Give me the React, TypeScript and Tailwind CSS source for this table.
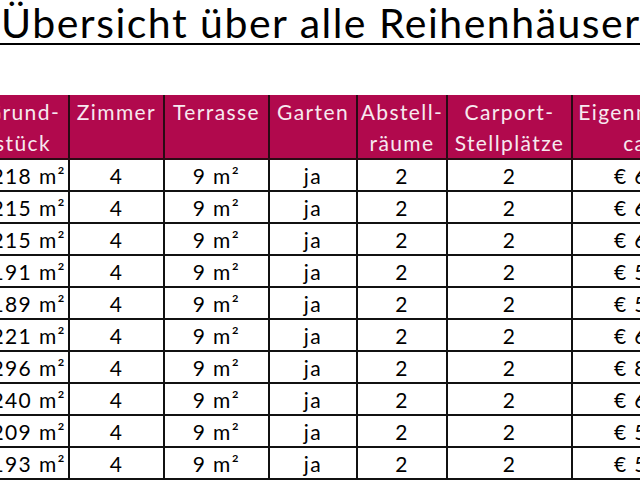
import React from "react";

const rows = [
  { grund: "218", eigen: "€ 63.500,-" },
  { grund: "215", eigen: "€ 62.900,-" },
  { grund: "215", eigen: "€ 62.900,-" },
  { grund: "191", eigen: "€ 57.800,-" },
  { grund: "189", eigen: "€ 57.400,-" },
  { grund: "221", eigen: "€ 64.100,-" },
  { grund: "296", eigen: "€ 84.300,-" },
  { grund: "240", eigen: "€ 68.200,-" },
  { grund: "209", eigen: "€ 59.900,-" },
  { grund: "193", eigen: "€ 58.100,-" },
];

const cols = [
  { label: ["Grund-", "stück"], w: "w-[92px]" },
  { label: ["Zimmer"], w: "w-[95px]" },
  { label: ["Terrasse"], w: "w-[105px]" },
  { label: ["Garten"], w: "w-[88px]" },
  { label: ["Abstell-", "räume"], w: "w-[90px]" },
  { label: ["Carport-", "Stellplätze"], w: "w-[125px]" },
  { label: ["Eigenmittel", "ca."], w: "w-[132px]" },
];

const cell = "border-2 border-[#111] text-center leading-none";

export default function App() {
  return (
    <div
      className="w-[640px] h-[480px] overflow-hidden bg-white text-black"
      style={{ fontFamily: "Lato, 'Open Sans', sans-serif" }}
    >
      <div className="border-b-2 border-black h-[45px]">
        <h1 className="text-[41px] leading-[45px] tracking-[1.5px] font-normal whitespace-nowrap pl-[1px]">
          Übersicht über alle Reihenhäuser
        </h1>
      </div>

      <div className="mt-[50px] -ml-[24px]">
        <table className="border-collapse table-fixed w-[727px] text-[21px] tracking-[1.4px]">
          <thead>
            <tr className="bg-[#b1094d] text-[#f7e9f0] h-[60px]">
              {cols.map((c, i) => (
                <th
                  key={i}
                  className={`${c.w} align-top font-normal leading-[31px] pt-[1px] border-x-2 border-b-2 border-[#2a0a14] text-center whitespace-nowrap`}
                >
                  {c.label.map((l, j) => (
                    <div key={j}>{l}</div>
                  ))}
                </th>
              ))}
            </tr>
          </thead>
          <tbody>
            {rows.map((r, i) => (
              <tr key={i} className="h-[32px]">
                <td className="border-2 border-[#111] text-right pr-[2px] leading-none whitespace-nowrap">
                  {r.grund} m²
                </td>
                <td className={cell}>4</td>
                <td className={cell}>9 m²</td>
                <td className={cell}>ja</td>
                <td className={cell}>2</td>
                <td className={cell}>2</td>
                <td className="border-2 border-[#111] text-left pl-[41px] leading-none whitespace-nowrap">
                  {r.eigen}
                </td>
              </tr>
            ))}
          </tbody>
        </table>
      </div>
    </div>
  );
}
